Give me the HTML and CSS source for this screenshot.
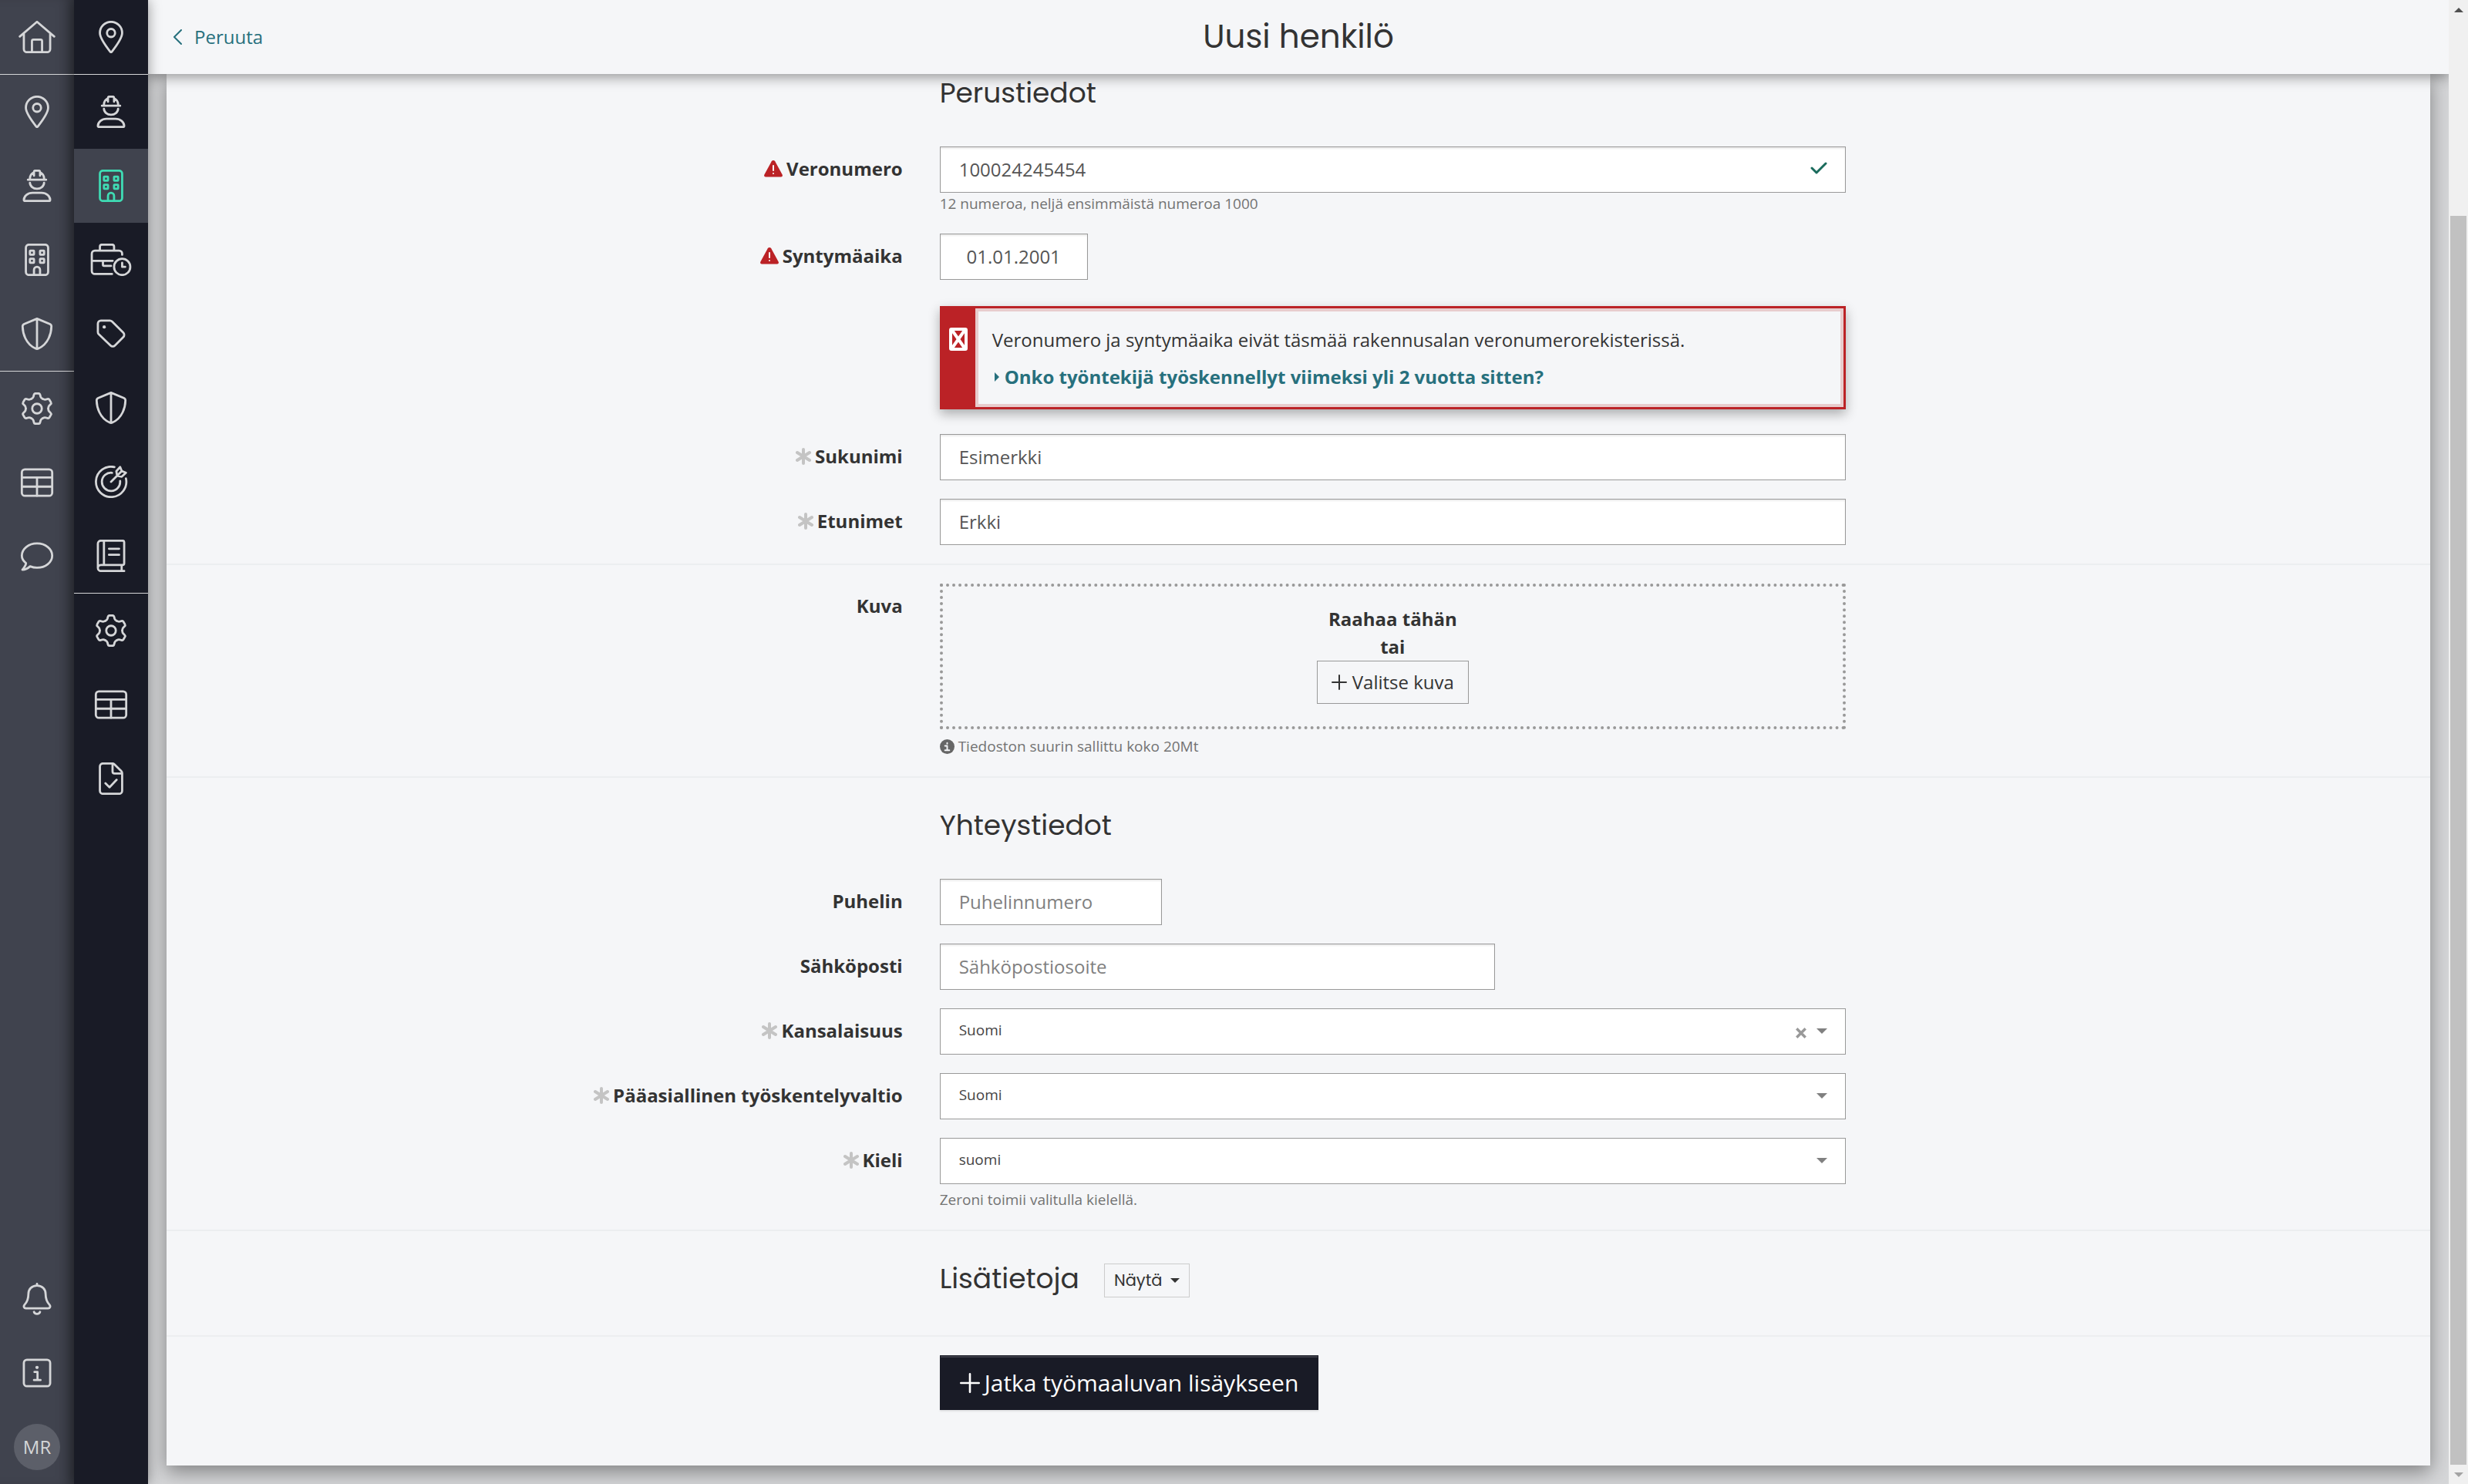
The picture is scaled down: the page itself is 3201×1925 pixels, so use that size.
FILE: index.html
```html
<!DOCTYPE html>
<html lang="fi">
  <head>
    <meta charset="UTF-8" />
    <meta name="viewport" content="width=device-width, initial-scale=1.0" />
    <title>Uusi henkilö</title>
    <link rel="stylesheet" href="styles.css">
  </head>
  <body>
    <svg class="sprite" aria-hidden="true">
      <symbol id="i-home" viewBox="0 0 576 512">
        <path d="M16 248L288 16l272 232M80 204v244a48 48 0 0 0 48 48h320a48 48 0 0 0 48-48V204M208 496V320a24 24 0 0 1 24-24h112a24 24 0 0 1 24 24v176" />
      </symbol>
      <symbol id="i-pin" viewBox="0 0 384 512">
        <path d="M203 490C250 430 368 282 368 192a176 176 0 0 0-352 0c0 90 118 238 165 298q11 12 22 0z" />
        <circle cx="192" cy="192" r="64" />
      </symbol>
      <symbol id="i-worker" viewBox="0 0 448 512">
        <path d="M80 160h288M112 160v-16c0-44 26-83 64-101M272 43c38 18 64 57 64 101v16M176 96V36q0-20 20-20h56q20 0 20 20v60M112 208a112 96 0 0 0 224 0M153 368h142c76 0 137 52 137 112a16 16 0 0 1-16 16H32a16 16 0 0 1-16-16c0-60 61-112 137-112z" />
      </symbol>
      <symbol id="i-building" viewBox="0 0 384 512">
        <rect x="16" y="16" width="352" height="480" rx="48" />
        <rect x="80" y="112" width="64" height="64" rx="8" />
        <rect x="240" y="112" width="64" height="64" rx="8" />
        <rect x="80" y="240" width="64" height="64" rx="8" />
        <rect x="240" y="240" width="64" height="64" rx="8" />
        <path d="M144 496v-80a48 48 0 0 1 96 0v80" />
      </symbol>
      <symbol id="i-shield" viewBox="0 0 512 512">
        <path d="M256 17l201 83c17 7 27 22 27 40-2 100-44 280-210 351a45 45 0 0 1-36 0C72 420 30 240 28 140c0-18 10-33 27-40zM256 17v477" />
      </symbol>
      <symbol id="i-gear" viewBox="0 0 512 512">
        <g id="tooth">
          <path d="M167 102Q192 88 200 66L207 38Q212 16 232 16H280Q300 16 305 38L312 66Q320 88 345 102" />
        </g>
        <use href="#tooth" transform="rotate(60 256 256)" />
        <use href="#tooth" transform="rotate(120 256 256)" />
        <use href="#tooth" transform="rotate(180 256 256)" />
        <use href="#tooth" transform="rotate(240 256 256)" />
        <use href="#tooth" transform="rotate(300 256 256)" />
        <circle cx="256" cy="256" r="76" />
      </symbol>
      <symbol id="i-table" viewBox="0 0 512 512">
        <rect x="16" y="48" width="480" height="416" rx="48" />
        <path d="M16 176h480M16 320h480M256 176v288" />
      </symbol>
      <symbol id="i-chat" viewBox="0 0 512 512">
        <path d="M82 360C40 326 16 284 16 240 16 134 122 48 256 48s240 86 240 192-106 192-240 192c-40 0-76-8-109-22-37 35-87 54-123 54 30-34 56-66 58-104z" />
      </symbol>
      <symbol id="i-briefcase" viewBox="0 0 640 512">
        <path d="M144 96V48q0-32 32-32h160q32 0 32 32v48M496 176v-16a48 48 0 0 0-48-48H64a48 48 0 0 0-48 48v272a48 48 0 0 0 48 48h272M16 272h330M192 272v64q0 16 16 16h112M496 304v64h48" />
        <circle cx="496" cy="368" r="128" />
      </symbol>
      <symbol id="i-tag" viewBox="0 0 448 512">
        <path d="M64 48h142a48 48 0 0 1 34 14l178 177a48 48 0 0 1 0 68L285 442a48 48 0 0 1-68 0L30 263a48 48 0 0 1-14-34V96a48 48 0 0 1 48-48z" />
        <circle class="dot" cx="116" cy="148" r="26" />
      </symbol>
      <symbol id="i-target" viewBox="0 0 512 512">
        <path d="M310 22a240 240 0 1 0 182 182M272 113a144 144 0 1 0 127 129M352 160L340 88l60-66 26 64 66 26-66 62zM256 256L426 86" />
      </symbol>
      <symbol id="i-book" viewBox="0 0 448 512">
        <path d="M432 496H64a48 48 0 0 1 0-96h344a24 24 0 0 0 24-24V40a24 24 0 0 0-24-24H64a48 48 0 0 0-48 48v384M112 16v384M392 400v96M192 144h160M192 240h160" />
      </symbol>
      <symbol id="i-file" viewBox="0 0 384 512">
        <path d="M64 16h148q20 0 34 14l108 108q14 14 14 34v276a48 48 0 0 1-48 48H64a48 48 0 0 1-48-48V64a48 48 0 0 1 48-48zM216 16v128q0 32 32 32h120M104 330l64 64 112-120" />
      </symbol>
      <symbol id="i-bell" viewBox="0 0 448 512">
        <path d="M224 16v20M224 44c-84 0-136 60-136 134 0 84-16 122-60 168-24 28-8 58 20 58h352c28 0 44-30 20-58-44-46-60-84-60-168 0-74-52-134-136-134zM176 460c12 44 84 44 96 0" />
      </symbol>
      <symbol id="i-info" viewBox="0 0 448 512">
        <rect x="16" y="48" width="416" height="416" rx="48" />
        <path d="M184 240h48v128M176 368h104" />
        <circle class="dot" cx="224" cy="168" r="26" />
      </symbol>
      <symbol id="i-plus" viewBox="0 0 20 20">
        <path d="M10 1v18M1 10h18" />
      </symbol>
      <symbol id="i-required" viewBox="0 0 20 22">
        <path d="M10 2v18M2 6l16 10M18 6L2 16" />
      </symbol>
      <symbol id="i-warning" viewBox="0 0 24 22">
        <path class="warning-shape" d="M12 0q1.500 0 2.200 1.200l9.300 17q1.300 2.800-1.500 3.300H2q-2.800-.5-1.500-3.300l9.300-17Q10.500 0 12 0z" />
        <path class="warning-mark" d="M12 7v6M12 17v.1" />
      </symbol>
    </svg>

    <div class="app">
      <nav class="rail rail-main" aria-label="Päävalikko">
        <a href="#" class="rail-item" aria-label="Etusivu"><svg class="icon"><use href="#i-home" /></svg></a>
        <hr class="rail-line">
        <a href="#" class="rail-item" aria-label="Työmaat"><svg class="icon"><use href="#i-pin" /></svg></a>
        <a href="#" class="rail-item" aria-label="Henkilöt"><svg class="icon"><use href="#i-worker" /></svg></a>
        <a href="#" class="rail-item" aria-label="Yritykset"><svg class="icon"><use href="#i-building" /></svg></a>
        <a href="#" class="rail-item" aria-label="Turvallisuus"><svg class="icon"><use href="#i-shield" /></svg></a>
        <hr class="rail-line">
        <a href="#" class="rail-item" aria-label="Asetukset"><svg class="icon"><use href="#i-gear" /></svg></a>
        <a href="#" class="rail-item" aria-label="Raportit"><svg class="icon"><use href="#i-table" /></svg></a>
        <a href="#" class="rail-item" aria-label="Viestit"><svg class="icon"><use href="#i-chat" /></svg></a>
        <div class="rail-bottom">
          <a href="#" class="rail-item" aria-label="Ilmoitukset"><svg class="icon"><use href="#i-bell" /></svg></a>
          <a href="#" class="rail-item" aria-label="Ohjeet"><svg class="icon"><use href="#i-info" /></svg></a>
          <a href="#" class="rail-item"><span class="avatar">MR</span></a>
        </div>
      </nav>

      <nav class="rail rail-sub" aria-label="Alavalikko">
        <a href="#" class="rail-item" aria-label="Työmaa"><svg class="icon"><use href="#i-pin" /></svg></a>
        <hr class="rail-line">
        <a href="#" class="rail-item" aria-label="Henkilöt"><svg class="icon"><use href="#i-worker" /></svg></a>
        <a href="#" class="rail-item active" aria-label="Yritykset"><svg class="icon"><use href="#i-building" /></svg></a>
        <a href="#" class="rail-item" aria-label="Työajat"><svg class="icon"><use href="#i-briefcase" /></svg></a>
        <a href="#" class="rail-item" aria-label="Tunnisteet"><svg class="icon"><use href="#i-tag" /></svg></a>
        <a href="#" class="rail-item" aria-label="Turvallisuus"><svg class="icon"><use href="#i-shield" /></svg></a>
        <a href="#" class="rail-item" aria-label="Tavoitteet"><svg class="icon"><use href="#i-target" /></svg></a>
        <a href="#" class="rail-item" aria-label="Päiväkirja"><svg class="icon"><use href="#i-book" /></svg></a>
        <hr class="rail-line">
        <a href="#" class="rail-item" aria-label="Asetukset"><svg class="icon"><use href="#i-gear" /></svg></a>
        <a href="#" class="rail-item" aria-label="Raportit"><svg class="icon"><use href="#i-table" /></svg></a>
        <a href="#" class="rail-item" aria-label="Dokumentit"><svg class="icon"><use href="#i-file" /></svg></a>
      </nav>

      <main class="main">
        <header class="topbar">
          <a href="#" class="back">
            <svg class="chevron" viewBox="0 0 12 20"><path d="M11 1L2 10l9 9" /></svg>
            Peruuta
          </a>
          <h1>Uusi henkilö</h1>
        </header>

        <form class="panel">
          <section class="section section-first">
            <div class="row">
              <div class="field section-title"><h2>Perustiedot</h2></div>
            </div>
            <div class="row">
              <label for="taxNumber"><svg class="warning"><use href="#i-warning" /></svg>Veronumero</label>
              <div class="field">
                <div class="control">
                  <input type="text" id="taxNumber" value="100024245454" />
                  <svg class="valid" viewBox="0 0 22 16"><path d="M2 8l6 6L20 2" /></svg>
                </div>
                <p class="help">12 numeroa, neljä ensimmäistä numeroa 1000</p>
              </div>
            </div>
            <div class="row">
              <label for="birthDate"><svg class="warning"><use href="#i-warning" /></svg>Syntymäaika</label>
              <div class="field"><input type="text" id="birthDate" class="input-date" value="01.01.2001" /></div>
            </div>
            <div class="row">
              <div class="field">
                <div class="alert" role="alert">
                  <div class="alert-side">
                    <svg class="alert-icon" viewBox="0 0 24 30"><rect x="2" y="2" width="20" height="26" rx="1" /><path d="M5 5l14 20M19 5L5 25" /></svg>
                  </div>
                  <div class="alert-body">
                    <p>Veronumero ja syntymäaika eivät täsmää rakennusalan veronumerorekisterissä.</p>
                    <a href="#"><svg class="caret-right" viewBox="0 0 6 12"><path d="M0 0l6 6-6 6z" /></svg>Onko työntekijä työskennellyt viimeksi yli 2 vuotta sitten?</a>
                  </div>
                </div>
              </div>
            </div>
            <div class="row">
              <label for="lastName"><svg class="required"><use href="#i-required" /></svg>Sukunimi</label>
              <div class="field"><input type="text" id="lastName" value="Esimerkki" /></div>
            </div>
            <div class="row">
              <label for="firstNames"><svg class="required"><use href="#i-required" /></svg>Etunimet</label>
              <div class="field"><input type="text" id="firstNames" value="Erkki" /></div>
            </div>
          </section>

          <section class="section">
            <div class="row">
              <label for="pickImage">Kuva</label>
              <div class="field">
                <div class="dropzone">
                  <strong>Raahaa tähän</strong>
                  <strong>tai</strong>
                  <button type="button" id="pickImage" class="btn-outline"><svg class="plus"><use href="#i-plus" /></svg>Valitse kuva</button>
                </div>
                <p class="help help-file">
                  <svg class="help-icon" viewBox="0 0 20 20"><circle cx="10" cy="10" r="10" /><path d="M7 9h3v6M7 15h6M10 5v1" /></svg>
                  Tiedoston suurin sallittu koko 20Mt
                </p>
              </div>
            </div>
          </section>

          <section class="section">
            <div class="row">
              <div class="field section-title"><h2>Yhteystiedot</h2></div>
            </div>
            <div class="row">
              <label for="phone">Puhelin</label>
              <div class="field"><input type="tel" id="phone" class="input-phone" placeholder="Puhelinnumero" /></div>
            </div>
            <div class="row">
              <label for="email">Sähköposti</label>
              <div class="field"><input type="email" id="email" class="input-email" placeholder="Sähköpostiosoite" /></div>
            </div>
            <div class="row">
              <label for="nationality"><svg class="required"><use href="#i-required" /></svg>Kansalaisuus</label>
              <div class="field">
                <div class="control">
                  <select id="nationality"><option>Suomi</option></select>
                  <button type="button" class="clear" aria-label="Tyhjennä"><svg viewBox="0 0 14 12"><path d="M2 1l10 10M12 1L2 11" /></svg></button>
                  <svg class="caret" viewBox="0 0 14 7"><path d="M0 0h14L7 7z" /></svg>
                </div>
              </div>
            </div>
            <div class="row">
              <label for="workCountry"><svg class="required"><use href="#i-required" /></svg>Pääasiallinen työskentelyvaltio</label>
              <div class="field">
                <div class="control">
                  <select id="workCountry"><option>Suomi</option></select>
                  <svg class="caret" viewBox="0 0 14 7"><path d="M0 0h14L7 7z" /></svg>
                </div>
              </div>
            </div>
            <div class="row">
              <label for="language"><svg class="required"><use href="#i-required" /></svg>Kieli</label>
              <div class="field">
                <div class="control">
                  <select id="language"><option>suomi</option></select>
                  <svg class="caret" viewBox="0 0 14 7"><path d="M0 0h14L7 7z" /></svg>
                </div>
                <p class="help help-select">Zeroni toimii valitulla kielellä.</p>
              </div>
            </div>
          </section>

          <section class="section">
            <div class="row">
              <div class="field section-title">
                <h2>Lisätietoja</h2>
                <button type="button" class="btn-toggle">Näytä<svg class="caret-down" viewBox="0 0 12 6"><path d="M0 0h12L6 6z" /></svg></button>
              </div>
            </div>
          </section>

          <section class="section section-submit">
            <div class="row">
              <div class="field">
                <button type="submit" class="btn-primary"><svg class="plus"><use href="#i-plus" /></svg>Jatka työmaaluvan lisäykseen</button>
              </div>
            </div>
          </section>
        </form>
      </main>

      <div class="scrollbar" aria-hidden="true">
        <svg class="scroll-up" viewBox="0 0 12 6"><path d="M6 0l6 6H0z" /></svg>
        <div class="scroll-space"></div>
        <div class="scroll-thumb"></div>
        <svg class="scroll-down" viewBox="0 0 12 6"><path d="M0 0h12L6 6z" /></svg>
      </div>
    </div>
  </body>
</html>
```

FILE: styles.css
```css
* {
  box-sizing: border-box;
}
body {
  margin: 0;
  font-family: "Open Sans", sans-serif;
  font-size: 24px;
  line-height: 34px;
  color: #333;
  background-color: #d5d6d8;
}
h1,
h2,
p {
  margin: 0;
}
h1,
h2,
.btn-toggle {
  font-family: Poppins, Inter, sans-serif;
  font-weight: 400;
}
svg {
  display: block;
  flex: none;
  fill: none;
  stroke: currentColor;
  stroke-linecap: round;
  stroke-linejoin: round;
}
.sprite {
  position: absolute;
  width: 0;
  height: 0;
}
.app {
  display: flex;
  min-height: 100vh;
}

/* side rails */
.rail {
  display: flex;
  flex-direction: column;
  flex: none;
  width: 96px;
  color: #d5d6d8;
}
.rail-main {
  background-color: #40434e;
  box-shadow: inset -16px 0 16px -8px rgba(0, 0, 0, 0.25);
}
.rail-sub {
  position: relative;
  z-index: 3;
  background-color: #191b26;
  box-shadow: 0 0 16px rgba(0, 0, 0, 0.4);
}
.rail-item {
  display: flex;
  align-items: center;
  justify-content: center;
  height: 96px;
  color: inherit;
  text-decoration: none;
}
.rail-item.active {
  color: #3fdcb4;
  background-color: #40434e;
}
.rail-line {
  width: 100%;
  margin: 0;
  border: 0;
  border-top: 1px solid #d5d6d8;
}
.rail-bottom {
  margin-top: auto;
}
.icon {
  width: 54px;
  height: 42px;
  stroke-width: 34px;
}
.dot {
  fill: currentColor;
  stroke: none;
}
.avatar {
  width: 60px;
  height: 60px;
  border-radius: 50%;
  line-height: 60px;
  text-align: center;
  background-color: #5c5f69;
}

/* top bar */
.main {
  flex: 1;
  min-width: 0;
}
.topbar {
  position: relative;
  z-index: 2;
  display: grid;
  grid-template-columns: 1fr auto 1fr;
  align-items: center;
  height: 96px;
  padding: 0 32px;
  background-color: #f5f6f8;
  box-shadow: 0 4px 16px rgba(0, 0, 0, 0.4);
}
.topbar h1 {
  font-size: 42px;
  line-height: 60px;
}
.back {
  display: flex;
  align-items: center;
  gap: 16px;
  color: #27707d;
  text-decoration: none;
}
.chevron {
  width: 12px;
  height: 20px;
  stroke-width: 2px;
}

/* form */
.panel {
  margin: 0 24px 24px;
  background-color: #f5f6f8;
  box-shadow: 0 8px 24px rgba(0, 0, 0, 0.4);
}
.section {
  padding-top: 24px;
  border-top: 2px solid #eceef0;
}
.section-first {
  padding-top: 0;
  border-top: 0;
}
.section-submit {
  padding-bottom: 48px;
}
.row {
  display: flex;
  padding-bottom: 24px;
}
.row label {
  display: flex;
  justify-content: flex-end;
  align-items: center;
  gap: 5px;
  width: 33.333%;
  height: 58px;
  padding-right: 24px;
  font-weight: 700;
}
.field {
  width: 41.667%;
  padding: 0 24px;
}
.field:first-child {
  margin-left: 33.333%;
}
.section-title {
  display: flex;
  gap: 32px;
  padding-top: 18px;
  padding-bottom: 25px;
}
.section-first .section-title {
  padding-top: 5px;
}
h2 {
  font-size: 36px;
  line-height: 40px;
}
.warning {
  width: 24px;
  height: 22px;
}
.warning-shape {
  fill: #bb2226;
  stroke: none;
}
.warning-mark {
  stroke: #fff;
  stroke-width: 2px;
}
.required {
  width: 20px;
  height: 22px;
  color: #c4c4c4;
  stroke-width: 4px;
}
.control {
  position: relative;
}
input,
select {
  display: block;
  width: 100%;
  height: 60px;
  padding: 0 24px 2px;
  border: 1px solid #999;
  border-radius: 0;
  font: inherit;
  color: #555;
  background-color: #fff;
  box-shadow: inset 0 2px 2px rgba(0, 0, 0, 0.08);
}
input::placeholder {
  color: #808080;
  opacity: 1;
}
select {
  appearance: none;
  padding-bottom: 4px;
  font-size: 19px;
  color: #444;
  box-shadow: none;
}
.input-date {
  width: 192px;
  text-align: center;
}
.input-phone {
  width: 288px;
}
.input-email {
  width: 720px;
}
.valid {
  position: absolute;
  top: 20px;
  right: 24px;
  width: 22px;
  height: 16px;
  color: #1a6b5c;
  stroke-width: 3px;
}
.caret {
  position: absolute;
  top: 26px;
  right: 24px;
  width: 14px;
  height: 7px;
  color: #808080;
}
.clear {
  position: absolute;
  top: 25px;
  right: 50px;
  padding: 0;
  border: 0;
  color: #999;
  background: none;
}
.clear svg {
  width: 16px;
  height: 14px;
  stroke-width: 3px;
  stroke-linecap: butt;
}
.caret,
.caret-right,
.caret-down,
.scroll-up,
.scroll-down {
  fill: currentColor;
  stroke: none;
}
.help {
  display: flex;
  align-items: center;
  gap: 5px;
  font-size: 19px;
  line-height: 29px;
  color: #737373;
}
.help-select {
  margin-top: 6px;
}
.help-file {
  margin-top: 8px;
}
.help-icon {
  width: 19px;
  height: 19px;
  fill: #666;
  stroke: none;
}
.help-icon path {
  fill: none;
  stroke: #f5f6f8;
  stroke-width: 2px;
}

/* alert */
.alert {
  display: flex;
  margin: 10px 0 8px;
  border: 3px solid #bb2226;
  box-shadow: 0 6px 14px rgba(0, 0, 0, 0.3);
}
.alert-side {
  width: 43px;
  padding: 25px 0 0 9px;
  background-color: #bb2226;
}
.alert-icon {
  width: 24px;
  height: 30px;
  color: #fff;
  stroke-width: 4px;
}
.alert-body {
  flex: 1;
  padding: 20px 18px 18px;
  border: 4px solid #e8cccd;
}
.alert-body a {
  display: flex;
  align-items: center;
  gap: 7px;
  margin-top: 14px;
  padding-left: 3px;
  font-weight: 700;
  color: #27707d;
  text-decoration: none;
}
.caret-right {
  width: 6px;
  height: 12px;
}

/* image upload */
.dropzone {
  display: flex;
  flex-direction: column;
  align-items: center;
  padding: 24px 24px 29px;
  border: 4px dotted #999;
  line-height: 36px;
}

button {
  font: inherit;
  color: #333;
  cursor: pointer;
}
.btn-outline {
  display: flex;
  align-items: center;
  gap: 7px;
  height: 56px;
  padding: 0 18px;
  border: 1px solid #999;
  background: none;
}
.plus {
  width: 20px;
  height: 20px;
  stroke-width: 2px;
}
.btn-toggle {
  display: flex;
  align-items: center;
  gap: 10px;
  height: 44px;
  padding: 0 12px;
  border: 1px solid #ccc;
  font-size: 21px;
  background: none;
}
.caret-down {
  width: 12px;
  height: 6px;
}
.btn-primary {
  display: flex;
  align-items: center;
  gap: 6px;
  height: 71px;
  padding: 0 25px;
  border: 1px solid #191b26;
  font-size: 30px;
  color: #fff;
  background-color: #191b26;
  box-shadow: inset 0 2px 0 rgba(255, 255, 255, 0.15), 0 2px 2px rgba(0, 0, 0, 0.08);
}
.btn-primary .plus {
  width: 26px;
  height: 26px;
}

/* scrollbar */
.scrollbar {
  position: relative;
  z-index: 3;
  display: flex;
  flex-direction: column;
  align-items: center;
  flex: none;
  width: 25px;
  background-color: #f0f0f0;
}
.scroll-up,
.scroll-down {
  width: 12px;
  height: 6px;
  margin: 10px 0 9px;
  color: #505050;
}
.scroll-down {
  color: #a3a3a3;
}
.scroll-space {
  flex: 255;
}
.scroll-thumb {
  flex: 1620;
  width: 21px;
  background-color: #c1c1c1;
}
```
